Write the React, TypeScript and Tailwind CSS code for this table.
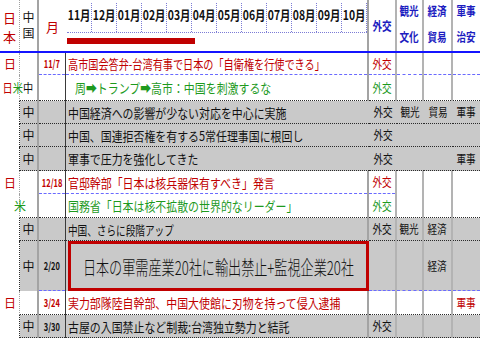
import type { ReactNode } from 'react'

type Tone = 'red' | 'green' | 'black'
type Line = 'dot' | 'blue' | 'none'

const toneCls: Record<Tone, string> = {
  red: 'text-[#c00000]',
  green: 'text-[#1e9a1e]',
  black: 'text-[#111111]',
}

const lineCls: Record<Line, string> = {
  dot: 'border-b border-dotted border-[#2a2a2a]',
  blue: 'border-b border-dashed border-[#6a6aff]',
  none: '',
}

const widths = [
  'w-[20px]',
  'w-[19px]',
  'w-[27px]',
  'w-[303px]',
  'w-[28px]',
  'w-[27px]',
  'w-[29px]',
  'w-[27px]',
]

const months = ['11月', '12月', '01月', '02月', '03月', '04月', '05月', '06月', '07月', '08月', '09月', '10月']

interface RowData {
  h: string
  gray?: boolean
  grid?: boolean
  c1?: ReactNode
  c2?: string
  date?: string
  text?: string
  sx?: string
  indent?: boolean
  big?: string
  tone: Tone
  tags: string[]
  lines: Line[]
}

const dotAll: Line[] = ['dot', 'dot', 'dot', 'dot', 'dot', 'dot', 'dot']

const Nichi = () => <span className="pl-[4px] text-[12px] leading-none text-[#c00000]">日</span>

const rows: RowData[] = [
  {
    h: 'h-[22px]',
    c1: <Nichi />,
    date: '11/7',
    text: '高市国会答弁-台湾有事で日本の「自衛権を行使できる」',
    sx: 'scale-x-[0.78]',
    tone: 'red',
    tags: ['外交', '', '', ''],
    lines: ['none', 'blue', 'blue', 'blue', 'blue', 'blue', 'blue'],
  },
  {
    h: 'h-[26px]',
    c1: (
      <span className="inline-block origin-left scale-x-[0.85] whitespace-nowrap pl-[3px] text-[12px] leading-none">
        <span className="text-[#c00000]">日</span>
        <span className="text-[#1e9a1e]">米</span>
        <span className="text-[#111]">中</span>
      </span>
    ),
    text: '周➡トランプ➡高市：中国を刺激するな',
    indent: true,
    tone: 'green',
    tags: ['外交', '', '', ''],
    lines: dotAll,
  },
  {
    h: 'h-[23px]',
    gray: true,
    c2: '中',
    text: '中国経済への影響が少ない対応を中心に実施',
    tone: 'black',
    tags: ['外交', '観光', '貿易', '軍事'],
    lines: dotAll,
  },
  {
    h: 'h-[23px]',
    gray: true,
    c2: '中',
    text: '中国、国連拒否権を有する5常任理事国に根回し',
    tone: 'black',
    tags: ['外交', '', '', ''],
    lines: dotAll,
  },
  {
    h: 'h-[24px]',
    gray: true,
    c2: '中',
    text: '軍事で圧力を強化してきた',
    tone: 'black',
    tags: ['外交', '', '', '軍事'],
    lines: dotAll,
  },
  {
    h: 'h-[23px]',
    c1: <Nichi />,
    date: '12/18',
    text: '官邸幹部「日本は核兵器保有すべき」発言',
    tone: 'red',
    tags: ['外交', '', '', ''],
    lines: ['none', 'blue', 'blue', 'blue', 'none', 'none', 'none'],
  },
  {
    h: 'h-[24px]',
    c1: <span className="whitespace-nowrap pl-[14px] text-[12px] leading-none text-[#1e9a1e]">米</span>,
    text: '国務省「日本は核不拡散の世界的なリーダー」',
    tone: 'green',
    tags: ['外交', '', '', ''],
    lines: dotAll,
  },
  {
    h: 'h-[23px]',
    gray: true,
    grid: true,
    c2: '中',
    text: '中国、さらに段階アップ',
    sx: 'scale-x-[0.74]',
    tone: 'black',
    tags: ['外交', '観光', '経済', ''],
    lines: dotAll,
  },
  {
    h: 'h-[50px]',
    gray: true,
    grid: true,
    c2: '中',
    date: '2/20',
    big: '日本の軍需産業20社に輸出禁止+監視企業20社',
    tone: 'black',
    tags: ['', '', '経済', ''],
    lines: ['none', 'blue', 'none', 'blue', 'blue', 'blue', 'blue'],
  },
  {
    h: 'h-[24px]',
    c1: <Nichi />,
    date: '3/24',
    text: '実力部隊陸自幹部、中国大使館に刃物を持って侵入逮捕',
    tone: 'red',
    tags: ['', '', '', '軍事'],
    lines: dotAll,
  },
  {
    h: 'h-[23px]',
    gray: true,
    grid: true,
    c2: '中',
    date: '3/30',
    text: '古屋の入国禁止など制裁:台湾独立勢力と結託',
    tone: 'black',
    tags: ['外交', '', '', ''],
    lines: dotAll,
  },
]

function Cell({
  w,
  r = '',
  bg = '',
  line = '',
  className = '',
  children,
}: {
  w: string
  r?: string
  bg?: string
  line?: string
  className?: string
  children?: ReactNode
}) {
  return (
    <div className={`shrink-0 ${w} ${r} ${bg}`}>
      <div className={`flex h-full items-center ${line} ${className}`}>{children}</div>
    </div>
  )
}

function Tag({ label, tone }: { label: string; tone: Tone }) {
  if (!label) return null
  return (
    <span className={`inline-block scale-x-[0.8] whitespace-nowrap text-[12px] leading-none ${toneCls[tone]}`}>
      {label}
    </span>
  )
}

function TableRow({ row }: { row: RowData }) {
  const bg = row.gray ? 'bg-[#c9c9c9]' : ''
  const grid = !row.gray || row.grid
  const tagGrid = grid ? 'border-r-2 border-[#b3b3b3]' : ''

  return (
    <div className={`flex ${row.h}`}>
      <Cell
        w={widths[0]}
        r={row.gray ? 'border-r border-dotted border-[#2a2a2a]' : 'border-r border-dotted border-[#a0a0a0]'}
        className="overflow-visible"
      >
        {row.c1}
      </Cell>
      <Cell w={widths[1]} r="border-r-2 border-[#a3a3a3]" bg={bg} line={lineCls[row.lines[0]]} className="justify-center">
        {row.c2 && <span className="text-[12px] leading-none text-[#111]">{row.c2}</span>}
      </Cell>
      <Cell w={widths[2]} r="border-r border-[#3a3a3a]" bg={bg} line={lineCls[row.lines[1]]} className="justify-center">
        {row.date && (
          <span
            className={`inline-block scale-x-[0.68] whitespace-nowrap text-[11px] font-semibold leading-none ${toneCls[row.tone]}`}
          >
            {row.date}
          </span>
        )}
      </Cell>
      <Cell
        w={widths[3]}
        r={grid && !row.big ? 'border-r-2 border-[#a3a3a3]' : ''}
        bg={bg}
        line={lineCls[row.lines[2]]}
        className={row.indent ? 'pl-[9px]' : 'pl-[2px]'}
      >
        {row.big ? (
          <div className="flex h-full w-full items-center justify-center border-[3px] border-[#c00000]">
            <span className="inline-block scale-x-[0.69] whitespace-nowrap text-[19px] font-light leading-none text-[#111]">
              {row.big}
            </span>
          </div>
        ) : (
          <span
            className={`inline-block origin-left whitespace-nowrap text-[13px] leading-none ${row.sx ?? 'scale-x-[0.84]'} ${toneCls[row.tone]}`}
          >
            {row.text}
          </span>
        )}
      </Cell>
      <Cell w={widths[4]} r={tagGrid} bg={bg} line={lineCls[row.lines[3]]} className="justify-center">
        <Tag label={row.tags[0]} tone={row.tone} />
      </Cell>
      <Cell w={widths[5]} r={tagGrid} bg={bg} line={lineCls[row.lines[4]]} className="justify-center">
        <Tag label={row.tags[1]} tone={row.tone} />
      </Cell>
      <Cell w={widths[6]} r={tagGrid} bg={bg} line={lineCls[row.lines[5]]} className="justify-center">
        <Tag label={row.tags[2]} tone={row.tone} />
      </Cell>
      <Cell w={widths[7]} bg={bg} line={lineCls[row.lines[6]]} className="justify-center">
        <Tag label={row.tags[3]} tone={row.tone} />
      </Cell>
    </div>
  )
}

function HeadTag({ top, bottom }: { top: string; bottom?: string }) {
  const cls = 'inline-block scale-x-[0.8] whitespace-nowrap text-[12px] font-bold leading-[13px] text-[#1c1cc0]'
  if (!bottom) return <span className={cls}>{top}</span>
  return (
    <div className="flex flex-col items-center gap-[13px] pb-[4px]">
      <span className={cls}>{top}</span>
      <span className={cls}>{bottom}</span>
    </div>
  )
}

export default function App() {
  return (
    <div className="h-[339px] w-[480px] overflow-hidden bg-white font-['Noto_Sans_CJK_JP','DejaVu_Sans',sans-serif] text-[#111]">
      {/* header */}
      <div className="flex h-[53px] border-b-2 border-[#1414ff]">
        <div className="flex w-[20px] shrink-0 flex-col items-center border-r border-dotted border-[#a0a0a0] pt-[8px] text-[13px] leading-[19px] text-[#c00000]">
          <span>日</span>
          <span>本</span>
        </div>
        <div className="flex w-[19px] shrink-0 flex-col items-center border-r-2 border-[#a3a3a3] pt-[9px] text-[12px] leading-[16px]">
          <span>中</span>
          <span>国</span>
        </div>
        <div className="flex w-[27px] shrink-0 items-center justify-center pt-[2px] text-[13px] leading-none text-[#c00000]">
          月
        </div>
        <div className="w-[303px] shrink-0 border-r-2 border-[#a3a3a3] pl-[1px]">
          <div className="mt-[3px] flex h-[30px] w-[300px] border-b border-dotted border-[#7c7cd6]">
            {months.map((m) => (
              <div
                key={m}
                className="flex w-[25px] shrink-0 items-center justify-center border-r border-dotted border-[#7c7cd6] pb-[6px]"
              >
                <span className="inline-block scale-x-[0.8] whitespace-nowrap text-[13px] font-bold leading-none">
                  {m}
                </span>
              </div>
            ))}
          </div>
          <div className="mt-[5px] h-[6px] w-[128px] bg-[#c00000]" />
        </div>
        <div className="flex w-[28px] shrink-0 items-center justify-center border-r-2 border-[#b3b3b3]">
          <HeadTag top="外交" />
        </div>
        <div className="flex w-[27px] shrink-0 items-center justify-center border-r-2 border-[#b3b3b3]">
          <HeadTag top="観光" bottom="文化" />
        </div>
        <div className="flex w-[29px] shrink-0 items-center justify-center border-r-2 border-[#b3b3b3]">
          <HeadTag top="経済" bottom="貿易" />
        </div>
        <div className="flex w-[27px] shrink-0 items-center justify-center">
          <HeadTag top="軍事" bottom="治安" />
        </div>
      </div>

      {rows.map((row, i) => (
        <TableRow key={i} row={row} />
      ))}
    </div>
  )
}
